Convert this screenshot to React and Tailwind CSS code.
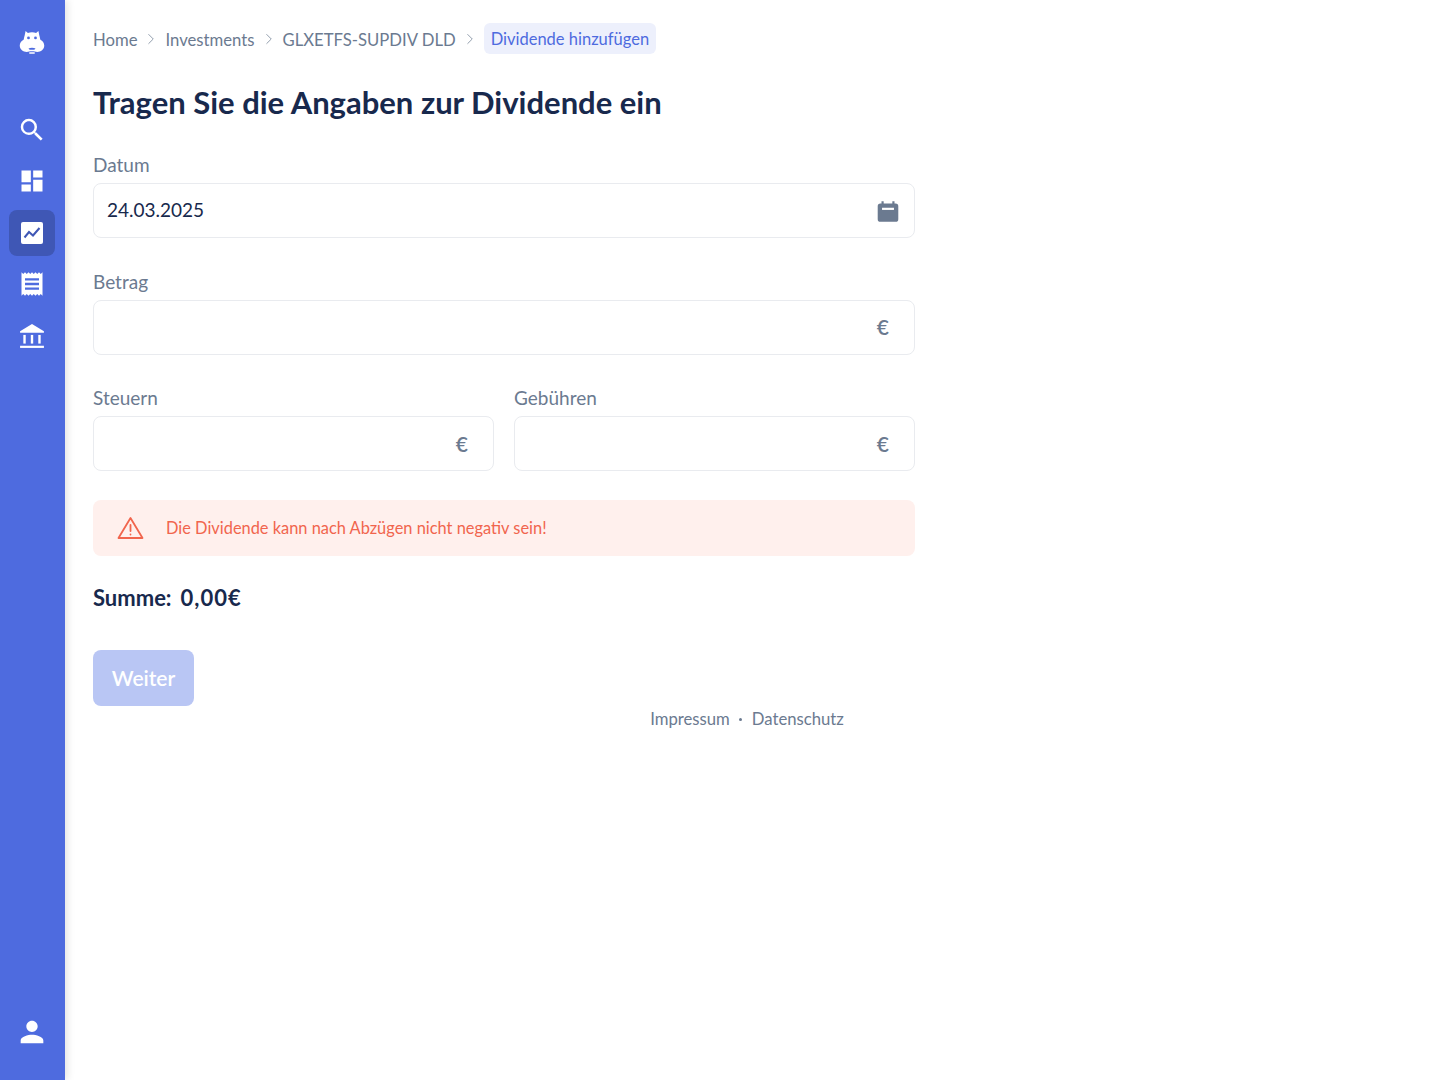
import React from "react";
import { ChevronRight } from "lucide-react";
import { MdSearch, MdDashboard, MdReceipt, MdPerson } from "react-icons/md";

const font = "font-['Lato','Noto_Sans',sans-serif]";

const HippoLogo = () => (
  <svg viewBox="0 0 24 24" className="w-[28px] h-[28px]" fill="white">
    <path d="M6.5 2.5 L8.5 4.2 C10.5 3.4 13.5 3.4 15.5 4.2 L17.5 2.5 L18.3 6.5 C18.8 8 18.8 9 19.2 10 C21 11 22.5 12.6 22.5 15 C22.5 18.5 19.5 20.5 16.5 20.5 C15 20.5 14 20 12 20 C10 20 9 20.5 7.5 20.5 C4.5 20.5 1.5 18.5 1.5 15 C1.5 12.6 3 11 4.8 10 C5.2 9 5.2 8 5.7 6.5 Z" />
    <circle cx="9" cy="8.5" r="1.2" fill="#4e6bdf" />
    <circle cx="15" cy="8.5" r="1.2" fill="#4e6bdf" />
    <path d="M9 17.5 C10.5 16.7 13.5 16.7 15 17.5 L14 18.7 L10 18.7 Z" fill="#4e6bdf" />
    <rect x="9.5" y="20.8" width="5" height="1.2" rx="0.6" />
  </svg>
);

const ChartIcon = () => (
  <svg viewBox="0 0 22 22" className="w-[22px] h-[22px]">
    <rect width="22" height="22" rx="2" fill="white" />
    <path d="M3.5 15.5 L8 10 L12 13.5 L18.5 6" fill="none" stroke="#3f57b5" strokeWidth="2" />
  </svg>
);

const BankIcon = () => (
  <svg viewBox="0 0 24 24" className="w-[26px] h-[26px]" fill="white">
    <path d="M12 1 L23 7.5 V9 H1 V7.5 Z" />
    <rect x="4" y="11" width="2.2" height="8" />
    <rect x="10.9" y="11" width="2.2" height="8" />
    <rect x="17.8" y="11" width="2.2" height="8" />
    <rect x="1" y="21" width="22" height="2" />
  </svg>
);

const CalendarIcon = () => (
  <svg viewBox="0 0 24 24" className="w-[26px] h-[26px] mr-[-1px]">
    <path d="M6 3h2v2h8V3h2v2h1a2.5 2.5 0 0 1 2.5 2.5v12A2.5 2.5 0 0 1 19 22H5a2.5 2.5 0 0 1-2.5-2.5v-12A2.5 2.5 0 0 1 5 5h1z" fill="#6b7a90" />
    <rect x="6.5" y="9" width="11" height="2" fill="white" />
  </svg>
);

const WarnIcon = () => (
  <svg viewBox="0 0 26 24" className="w-[27px] h-[24px]" fill="none" stroke="#f1654d" strokeWidth="1.8" strokeLinejoin="round" strokeLinecap="round">
    <path d="M13 2 L25 22 H1 Z" />
    <path d="M13 9 V15" />
    <path d="M13 18.4 V18.5" />
  </svg>
);

const Field = ({ label, value, suffix, className }) => (
  <div className={`flex flex-col ${className || ""}`}>
    <label className="text-[19px] leading-[22px] text-[#6b7a90] mb-[7px]">{label}</label>
    <div className="h-[55px] rounded-lg border border-[#e9ebef] flex items-center justify-between pl-[13px] pr-[14px] text-[19px] text-[#18294d]">
      <span>{value}</span>
      {suffix}
    </div>
  </div>
);

const Euro = () => <span className="text-[#6b7a90] text-[21px] font-semibold mr-[11px]">€</span>;

const Crumb = ({ children }) => (
  <>
    <span className="text-[16.7px] text-[#6b7a90] pt-[4px]">{children}</span>
    <ChevronRight size={18} strokeWidth={1.25} className="text-[#8b97a8] mx-[5px]" />
  </>
);

export default function App() {
  return (
    <div className={`flex min-h-[1080px] bg-white ${font}`}>
      <aside className="w-[65px] shrink-0 bg-[#4e6bdf] flex flex-col items-center pt-[28px] pb-[31px] pr-[1px] shadow-[2px_0_8px_rgba(0,0,0,0.12)]">
        <HippoLogo />
        <nav className="mt-[50.5px] flex flex-col items-center gap-[5.5px]">
          <div className="w-[46px] h-[46px] flex items-center justify-center">
            <MdSearch className="text-white text-[30px]" />
          </div>
          <div className="w-[46px] h-[46px] flex items-center justify-center">
            <MdDashboard className="text-white text-[28px]" />
          </div>
          <div className="w-[46px] h-[46px] rounded-lg bg-[#3f57b5] flex items-center justify-center">
            <ChartIcon />
          </div>
          <div className="w-[46px] h-[46px] flex items-center justify-center">
            <MdReceipt className="text-white text-[28px]" />
          </div>
          <div className="w-[46px] h-[46px] flex items-center justify-center">
            <BankIcon />
          </div>
        </nav>
        <MdPerson className="text-white text-[34px] mt-auto" />
      </aside>

      <main className="flex-1 px-[28px]">
        <div className="flex items-center pt-[23px]">
          <Crumb>Home</Crumb>
          <Crumb>Investments</Crumb>
          <Crumb>GLXETFS-SUPDIV DLD</Crumb>
          <span className="h-[31px] px-[7px] pt-[2px] rounded-md bg-[#edf0fc] text-[#4e6bdf] text-[16.5px] flex items-center">
            Dividende hinzufügen
          </span>
        </div>

        <h1 className="mt-[28px] text-[31px] leading-[40px] font-bold text-[#18294d]">
          Tragen Sie die Angaben zur Dividende ein
        </h1>

        <div className="w-[822px] mt-[32px] flex flex-col gap-[32.5px]">
          <Field label="Datum" value="24.03.2025" suffix={<CalendarIcon />} />
          <Field label="Betrag" suffix={<Euro />} />
          <div className="grid grid-cols-2 gap-[20px]">
            <Field label="Steuern" suffix={<Euro />} />
            <Field label="Gebühren" suffix={<Euro />} />
          </div>
        </div>

        <div className="w-[822px] h-[56px] mt-[29px] rounded-lg bg-[#fff0ed] flex items-center pl-[24px] text-[16.4px] text-[#f1654d]">
          <WarnIcon />
          <span className="ml-[22px]">Die Dividende kann nach Abzügen nicht negativ sein!</span>
        </div>

        <div className="mt-[27px] text-[22px] leading-[30px] font-bold text-[#18294d] flex gap-[9px]">
          <span>Summe:</span>
          <span className="tracking-[1px]">0,00€</span>
        </div>

        <button className="mt-[37px] w-[101px] h-[56px] rounded-lg bg-[#b9c6f4] text-white text-[21px] font-semibold">
          Weiter
        </button>

        <div className="flex justify-center items-center gap-[9.5px] text-[16.7px] text-[#6b7a90] mt-[1px]">
          <span>Impressum</span>
          <span className="w-[3px] h-[3px] rounded-full bg-[#6b7a90]" />
          <span>Datenschutz</span>
        </div>
      </main>
    </div>
  );
}
